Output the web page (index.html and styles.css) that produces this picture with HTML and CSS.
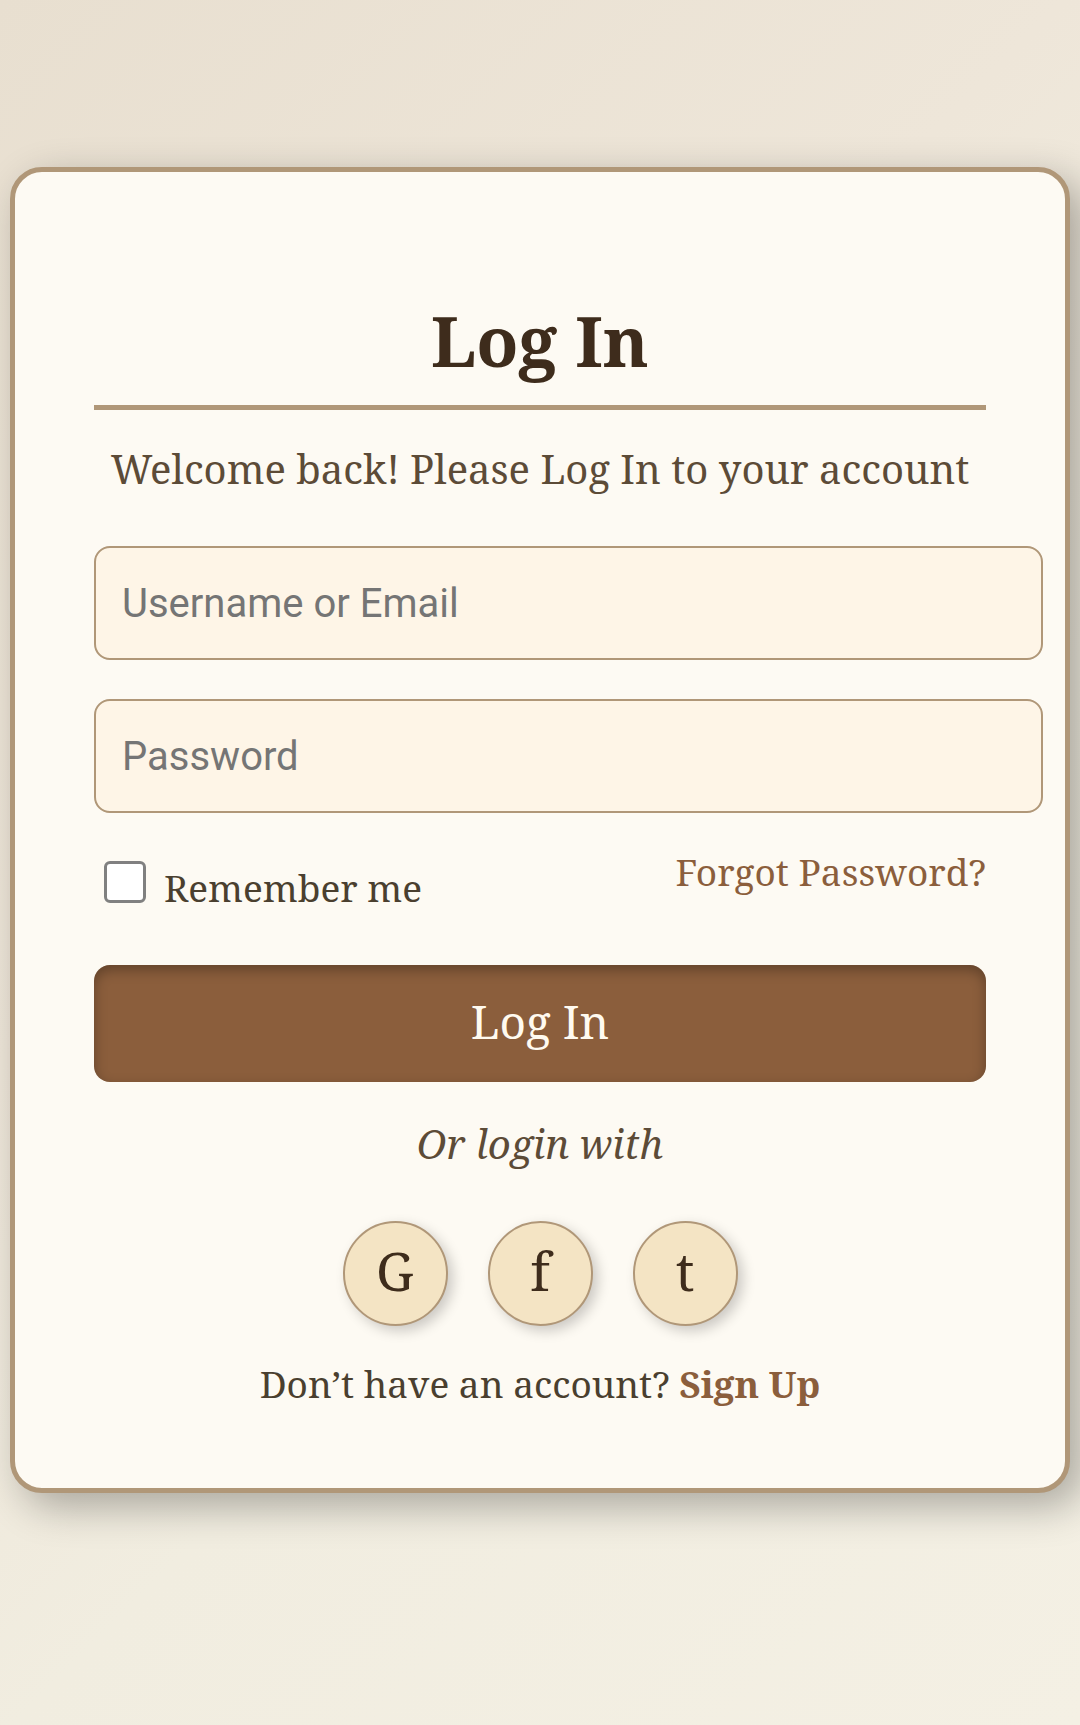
FILE: index.html
```html
<!DOCTYPE html>
<html lang="en">
<head>
<meta charset="utf-8">
<meta name="viewport" content="width=device-width, initial-scale=1">
<title>Log In</title>
<link rel="stylesheet" href="styles.css">
</head>
<body>
<main class="card">
  <h1 class="title">Log In</h1>
  <p class="welcome">Welcome back! Please Log In to your account</p>
  <form class="form">
    <input class="field" type="text" placeholder="Username or Email" aria-label="Username or Email">
    <input class="field" type="password" placeholder="Password" aria-label="Password">
    <div class="options">
      <label class="remember" for="remember"><input class="check" id="remember" type="checkbox">Remember me</label>
      <a class="forgot" href="#">Forgot Password?</a>
    </div>
    <button class="submit" type="submit">Log In</button>
  </form>
  <p class="divider">Or login with</p>
  <div class="socials">
    <a class="social" href="#">G</a>
    <a class="social" href="#">f</a>
    <a class="social" href="#">t</a>
  </div>
  <p class="signup">Don’t have an account? <a class="signup-link" href="#">Sign Up</a></p>
</main>
</body>
</html>
```

FILE: styles.css
```css
* { box-sizing: border-box; }
body {
  margin: 0;
  min-height: 100vh;
  padding: 167px 10px 232px;
  background: linear-gradient(135deg, #e8dfd0, #eee6d9 38%, #f1ede0 62%, #f4f0e4);
  color: #4a3f2f;
  font-family: "Noto Serif", "Droid Serif", "DejaVu Serif", serif;
}
.card {
  padding: 122px 79px 79px;
  background: #fdfaf3;
  border: 5px solid #b09778;
  border-radius: 32px;
  box-shadow: 13px 13px 40px rgba(0, 0, 0, 0.3);
  text-align: center;
}
.title {
  margin: 0;
  padding-bottom: 19px;
  border-bottom: 5px solid #b09778;
  color: #3e2c1c;
  font-size: 69px;
  line-height: 92px;
}
.welcome {
  margin: 31px 0 49px;
  color: #5c4b37;
  font-size: 40px;
  line-height: 56px;
}
.field {
  display: block;
  width: calc(100% + 57px);
  height: 114px;
  margin: 0 0 39px;
  padding: 0 26px;
  border: 2px solid #b09778;
  border-radius: 16px;
  background: #fef5e7;
  font: 40px Roboto, sans-serif;
}
.field::placeholder { color: #757575; }
.options {
  display: flex;
  justify-content: space-between;
  font-size: 37px;
}
.remember {
  display: flex;
  padding-top: 9px;
  line-height: 54px;
}
.check {
  appearance: none;
  width: 42px;
  height: 42px;
  margin: 0 18px 0 10px;
  border: 3px solid #808080;
  border-radius: 6px;
  background: #fff;
}
.check:checked {
  background: #8b5e3c;
}
.forgot {
  color: #8b5e3c;
  line-height: 40px;
  text-decoration: none;
}
.submit {
  width: 100%;
  height: 117px;
  margin-top: 50px;
  padding: 0 0 6px;
  border: 0;
  border-radius: 16px;
  background: #8b5e3c;
  box-shadow: inset 0 5px 13px rgba(0, 0, 0, 0.3);
  color: #fffaf0;
  font: 46px "Noto Serif", "DejaVu Serif", serif;
}
.divider {
  margin: 34px 0 49px;
  color: #5c4b37;
  font-size: 40px;
  font-style: italic;
  line-height: 56px;
}
.socials {
  display: flex;
  justify-content: center;
  gap: 40px;
}
.social {
  width: 105px;
  height: 105px;
  border: 2px solid #b09778;
  border-radius: 50%;
  background: #f4e4c4;
  box-shadow: 5px 5px 13px rgba(0, 0, 0, 0.2);
  color: #3e2c1c;
  font-size: 53px;
  line-height: 96px;
  text-decoration: none;
}
.signup {
  margin: 33px 0 0;
  font-size: 37px;
  line-height: 50px;
}
.signup-link {
  color: #8b5e3c;
  font-weight: bold;
  text-decoration: none;
}
```
